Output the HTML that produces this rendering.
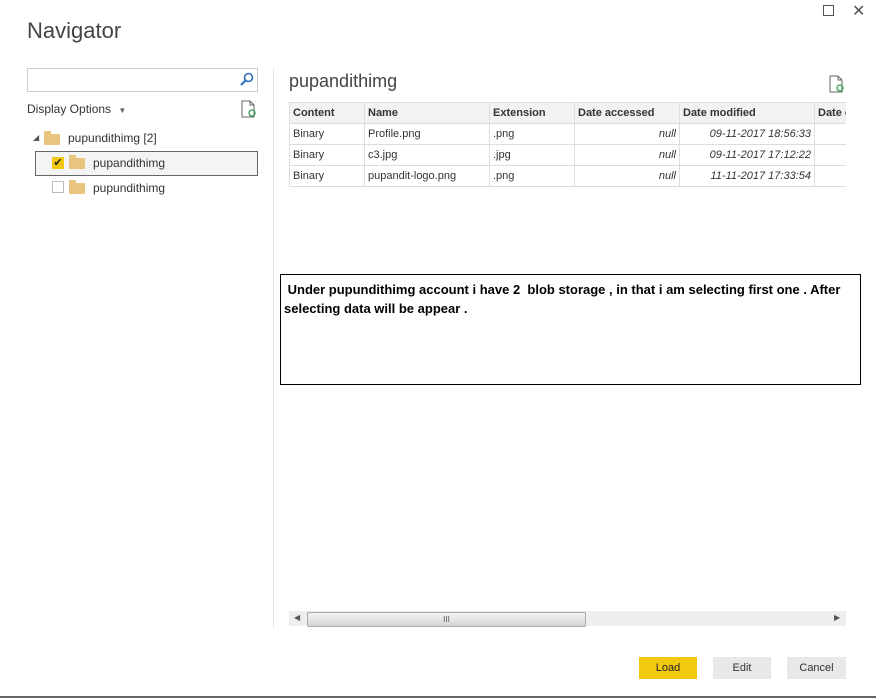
<!DOCTYPE html><html><head><style>
body{margin:0;width:876px;height:698px;background:#fff;position:relative;overflow:hidden;font-family:"Liberation Sans",sans-serif;color:#333}
.a{position:absolute}
table{border-collapse:collapse;font-size:11px;table-layout:fixed}
td,th{border:1px solid #ddd;height:20px;padding:0 3px;white-space:nowrap;overflow:hidden;text-align:left}
th{background:#f2f2f2;font-weight:bold;color:#333}
.r{text-align:right;font-style:italic}
.btn{position:absolute;top:657px;height:22px;width:58px;background:#e8e8e8;font-size:11px;text-align:center;line-height:22px;color:#333}
.fold{position:absolute;width:16px;height:11px;background:#e8c47e;border-radius:1px}
.fold:before{content:"";position:absolute;left:0;top:-3px;width:7px;height:3px;background:#e8c47e}
</style></head><body>
<div class="a" style="left:27px;top:18px;font-size:22px;color:#444">Navigator</div>
<div class="a" style="left:823px;top:5px;width:9px;height:9px;border:1px solid #555"></div>
<div class="a" style="left:852px;top:1px;font-size:16px;color:#555">✕</div>
<div class="a" style="left:27px;top:68px;width:229px;height:22px;border:1px solid #ccc"></div>
<svg class="a" style="left:240px;top:72px" width="14" height="14"><circle cx="8.5" cy="5.5" r="4" fill="none" stroke="#2a6ebb" stroke-width="1.6"/><line x1="5.5" y1="8.5" x2="1" y2="13" stroke="#2a6ebb" stroke-width="2"/></svg>
<div class="a" style="left:27px;top:102px;font-size:12px">Display Options <span style="font-size:8px;color:#666;margin-left:4px">▼</span></div>
<svg class="a" style="left:241px;top:100px" width="16" height="18"><path d="M1 1h8l4 4v12H1z" fill="none" stroke="#666"/><path d="M9 1v4h4" fill="none" stroke="#666"/><circle cx="11" cy="13" r="3" fill="none" stroke="#3a9a5a" stroke-width="1.3"/></svg>
<div class="a" style="left:33px;top:133px;font-size:8px;color:#555">◢</div>
<div class="fold" style="left:44px;top:134px"></div>
<div class="a" style="left:68px;top:131px;font-size:12px">pupundithimg [2]</div>
<div class="a" style="left:35px;top:151px;width:221px;height:23px;border:1px solid #666;background:#f4f4f4"></div>
<div class="a" style="left:52px;top:157px;width:12px;height:12px;background:#f2c811;font-size:11px;line-height:12px;text-align:center;color:#222">✔</div>
<div class="fold" style="left:69px;top:158px"></div>
<div class="a" style="left:93px;top:156px;font-size:12px">pupandithimg</div>
<div class="a" style="left:52px;top:181px;width:10px;height:10px;border:1px solid #bbb"></div>
<div class="fold" style="left:69px;top:183px"></div>
<div class="a" style="left:93px;top:181px;font-size:12px">pupundithimg</div>
<div class="a" style="left:273px;top:68px;width:1px;height:560px;background:#e4e4e4"></div>
<div class="a" style="left:289px;top:71px;font-size:18px;color:#444">pupandithimg</div>
<svg class="a" style="left:829px;top:75px" width="16" height="18"><path d="M1 1h8l4 4v12H1z" fill="none" stroke="#666"/><path d="M9 1v4h4" fill="none" stroke="#666"/><circle cx="11" cy="13" r="3" fill="none" stroke="#3a9a5a" stroke-width="1.3"/></svg>
<div class="a" style="left:289px;top:102px;width:557px;overflow:hidden">
<table style="width:600px"><colgroup><col style="width:75px"><col style="width:125px"><col style="width:85px"><col style="width:105px"><col style="width:135px"><col style="width:75px"></colgroup>
<tr><th>Content</th><th>Name</th><th>Extension</th><th>Date accessed</th><th>Date modified</th><th>Date created</th></tr>
<tr><td>Binary</td><td>Profile.png</td><td>.png</td><td class="r">null</td><td class="r">09-11-2017 18:56:33</td><td></td></tr>
<tr><td>Binary</td><td>c3.jpg</td><td>.jpg</td><td class="r">null</td><td class="r">09-11-2017 17:12:22</td><td></td></tr>
<tr><td>Binary</td><td>pupandit-logo.png</td><td>.png</td><td class="r">null</td><td class="r">11-11-2017 17:33:54</td><td></td></tr>
</table></div>
<div class="a" style="left:280px;top:274px;width:579px;height:109px;border:1px solid #000;font-size:13px;font-weight:bold;color:#000;line-height:19px;padding:5px 0 0 3px;box-sizing:border-box;width:581px;height:111px">&nbsp;Under pupundithimg account i have 2&nbsp; blob storage , in that i am selecting first one . After selecting data will be appear .</div>
<div class="a" style="left:289px;top:611px;width:557px;height:15px;background:#eee"></div>
<div class="a" style="left:294px;top:613px;font-size:8px;color:#555">◀</div>
<div class="a" style="left:834px;top:613px;font-size:8px;color:#555">▶</div>
<div class="a" style="left:307px;top:612px;width:277px;height:13px;border:1px solid #aaa;border-radius:2px;background:linear-gradient(#f4f4f4,#d4d4d4);font-size:8px;text-align:center;line-height:13px;color:#555">III</div>
<div class="btn" style="left:639px;background:#f2c811;color:#222">Load</div>
<div class="btn" style="left:713px">Edit</div>
<div class="btn" style="left:787px;width:59px">Cancel</div>
<div class="a" style="left:0;top:696px;width:876px;height:2px;background:#666"></div>
</body></html>
